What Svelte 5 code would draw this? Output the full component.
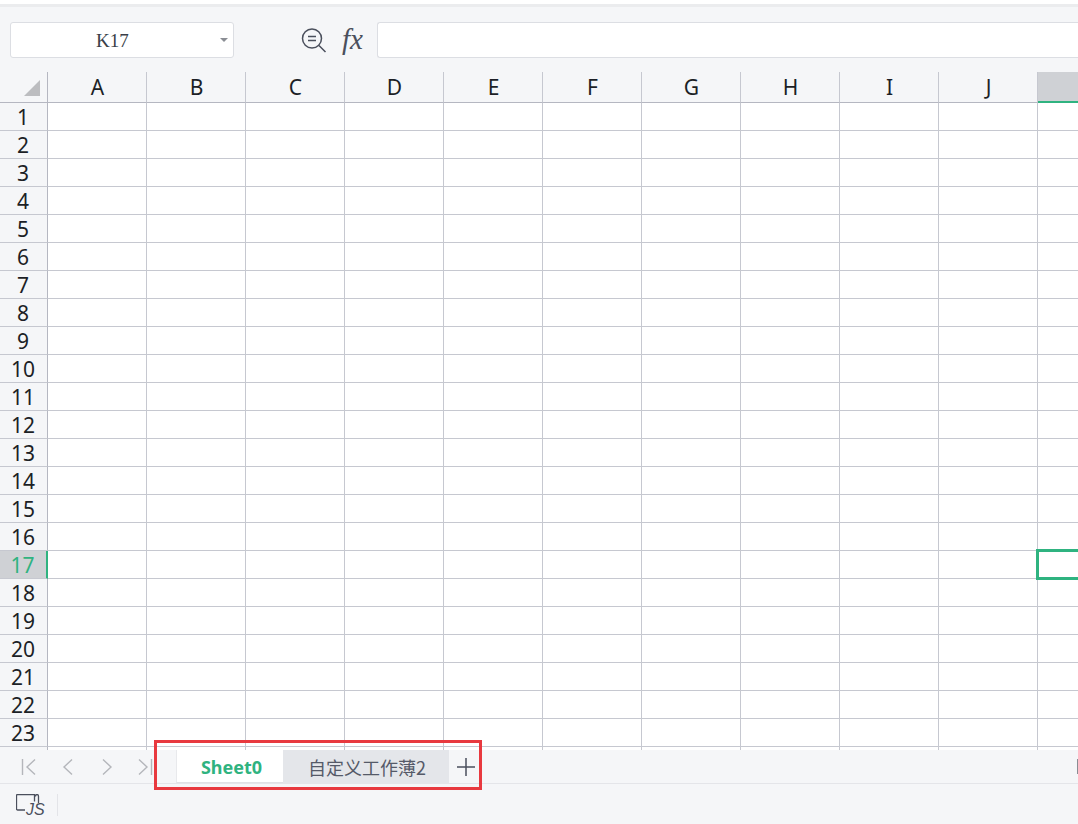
<script>
  // Column and row headers of the sheet
  const columns = ['A', 'B', 'C', 'D', 'E', 'F', 'G', 'H', 'I', 'J', 'K'];
  const rows = Array.from({ length: 24 }, (_, i) => i + 1);
  const activeColumn = 'K';
  const activeRow = 17;
</script>

<div class="page">
  <div class="topline"></div>

  <div class="toolbar">
    <div class="namebox">
      <span class="cellname">K17</span>
      <span class="caret"></span>
    </div>
    <svg class="zoom-icon" width="28" height="28" viewBox="0 0 28 28" fill="none" stroke="#4a4f5c" stroke-width="1.5">
      <circle cx="12" cy="12.500" r="9.500" />
      <path d="M8 10.500h8M8 14.500h8M19 19.500l6.500 6.500" />
    </svg>
    <span class="fx">fx</span>
    <div class="formula"></div>
  </div>

  <div class="sheet">
    <div class="row headrow">
      <div class="corner">
        <svg width="16" height="16" viewBox="0 0 16 16"><path d="M16 0v16H0z" fill="#bcbdc0" /></svg>
      </div>
      {#each columns as col}
        <div class="colhead" class:active={col === activeColumn}>{col === activeColumn ? '' : col}</div>
      {/each}
    </div>

    {#each rows as row}
      <div class="row">
        <div class="rowhead" class:active={row === activeRow}>{row === 24 ? '' : row}</div>
        {#each columns as col}
          <div class="cell" class:selected={col === activeColumn && row === activeRow}></div>
        {/each}
      </div>
    {/each}
  </div>

  <div class="tabbar">
    <div class="nav">
      <svg width="16" height="18" viewBox="0 0 16 18" fill="none" stroke="#b4b6bb" stroke-width="1.4"><path d="M1.500 1v16M14 1.500L6 9l8 7.500" /></svg>
      <svg width="16" height="18" viewBox="0 0 16 18" fill="none" stroke="#b4b6bb" stroke-width="1.4"><path d="M12 1.500L4 9l8 7.500" /></svg>
      <svg width="16" height="18" viewBox="0 0 16 18" fill="none" stroke="#b4b6bb" stroke-width="1.4"><path d="M4 1.500L12 9l-8 7.500" /></svg>
      <svg width="16" height="18" viewBox="0 0 16 18" fill="none" stroke="#b4b6bb" stroke-width="1.4"><path d="M1 1.500L9 9l-8 7.500M13.500 1v16" /></svg>
    </div>
    <div class="tab current">Sheet0</div>
    <div class="tab other">自定义工作薄2</div>
    <svg class="plus" width="20" height="20" viewBox="0 0 20 20" stroke="#4a4f5c" stroke-width="1.5"><path d="M10 1v18M1 10h18" /></svg>
    <div class="scrollmark"></div>
  </div>

  <div class="statusbar">
    <svg width="26" height="24" viewBox="0 0 26 24" fill="none" stroke="#4a4f5c" stroke-width="1.3">
      <path d="M9 16H1.500a1 1 0 0 1-1-1V1.500a1 1 0 0 1 1-1h17v7M19.500 2.500q0-2 1.500-2t1.500 2V9" />
    </svg>
    <span class="js">JS</span>
    <div class="divider"></div>
  </div>

  <div class="highlight"></div>
</div>

<style>
  :global(body) {
    margin: 0;
    background: #f5f6f8;
  }

  .page {
    position: relative;
    width: 1078px;
    height: 824px;
    overflow: hidden;
    font-family: "Noto Sans", "Noto Sans CJK SC", sans-serif;
    color: #1c1f26;
  }

  .topline {
    height: 7px;
    box-sizing: border-box;
    background: #fff;
    border-bottom: 3px solid #ebecee;
  }

  .toolbar {
    height: 65px;
    box-sizing: border-box;
    padding: 15px 0 0 10px;
    display: flex;
    align-items: flex-start;
  }

  .namebox {
    width: 224px;
    height: 36px;
    box-sizing: border-box;
    background: #fff;
    border: 1px solid #dcdee3;
    border-radius: 3px;
    display: flex;
    align-items: center;
    position: relative;
  }

  .cellname {
    margin: 2px 0 0 85px;
    font: 19px "Liberation Serif", serif;
    color: #3a3e48;
  }

  .caret {
    position: absolute;
    right: 5px;
    top: 15px;
    border: 4px solid transparent;
    border-top: 4px solid #8a8d94;
  }

  .zoom-icon {
    margin: 4px 0 0 66px;
  }

  .fx {
    margin: 1px 0 0 14px;
    width: 35px;
    font: italic 400 29px "Liberation Serif", serif;
    line-height: 32px;
    color: #4a4f5c;
  }

  .formula {
    flex: 1;
    height: 36px;
    box-sizing: border-box;
    background: #fff;
    border: 1px solid #dcdee3;
    border-right: 0;
    border-radius: 3px 0 0 3px;
  }

  .sheet {
    height: 678px;
    overflow: hidden;
  }

  .row {
    display: flex;
    height: 28px;
  }

  .headrow {
    height: 31px;
  }

  .corner {
    width: 48px;
    flex: none;
    box-sizing: border-box;
    border-right: 1px solid #b5b7c1;
    border-bottom: 1px solid #b5b7c1;
    display: flex;
    justify-content: flex-end;
    align-items: flex-end;
    padding: 0 7px 6px 0;
  }

  .colhead {
    width: 99px;
    flex: none;
    box-sizing: border-box;
    border-right: 1px solid #c6c8d0;
    border-bottom: 1px solid #b5b7c1;
    padding-left: 1px;
    text-align: center;
    font-size: 21px;
    line-height: 30px;
  }

  .colhead.active {
    background: #cfd1d5;
    border-bottom: 2px solid #2fb380;
  }

  .rowhead {
    width: 48px;
    flex: none;
    box-sizing: border-box;
    border-right: 1px solid #b5b7c1;
    border-bottom: 1px solid #c6c8d0;
    text-align: center;
    font-size: 21px;
    line-height: 28px;
    padding-right: 1px;
  }

  .rowhead.active {
    background: #cfd1d5;
    color: #2fb380;
    border-right: 2px solid #2fb380;
  }

  .cell {
    width: 99px;
    flex: none;
    box-sizing: border-box;
    background: #fff;
    border-right: 1px solid #c6c8d0;
    border-bottom: 1px solid #c6c8d0;
  }

  .cell.selected {
    position: relative;
  }

  /* selected cell outline sits over the grid lines */
  .cell.selected::after {
    content: "";
    position: absolute;
    left: -2px;
    top: -2px;
    width: 120px;
    height: 31px;
    box-sizing: border-box;
    border: 3px solid #2fb380;
  }

  .tabbar {
    height: 34px;
    display: flex;
    align-items: flex-start;
    position: relative;
    box-sizing: border-box;
    border-bottom: 1px solid #e4e5e9;
    background: #f5f6f8;
  }

  .nav {
    width: 176px;
    flex: none;
    box-sizing: border-box;
    padding: 8px 0 0 21px;
    display: flex;
    gap: 23px;
  }

  .tab {
    height: 33px;
    box-sizing: border-box;
    font-size: 18px;
    line-height: 35px;
    text-align: center;
  }

  .current {
    width: 107px;
    padding-left: 3px;
    background: #fff;
    color: #2fb380;
    font-weight: 700;
    border-left: 1px solid #e8e9ec;
    border-bottom: 1px solid #e0e1e5;
  }

  .other {
    width: 166px;
    padding-left: 2px;
    background: #e4e6ea;
    color: #555a68;
    font-family: "Noto Sans CJK SC", sans-serif;
  }

  .plus {
    margin: 7px 0 0 7px;
  }

  .scrollmark {
    position: absolute;
    right: 0;
    top: 9px;
    width: 1px;
    height: 15px;
    background: #8a8d94;
  }

  .statusbar {
    height: 40px;
    box-sizing: border-box;
    padding: 10px 0 0 16px;
    display: flex;
    align-items: flex-start;
    position: relative;
  }

  .js {
    position: absolute;
    left: 26px;
    top: 17px;
    font: italic 400 16px "Liberation Sans", sans-serif;
    color: #4a4f5c;
  }

  .divider {
    margin-left: 15px;
    width: 1px;
    height: 22px;
    background: #e3e4e8;
  }

  /* red annotation frame drawn over the tab bar */
  .highlight {
    position: absolute;
    left: 154px;
    top: 740px;
    width: 328px;
    height: 50px;
    box-sizing: border-box;
    border: 3px solid #e8393f;
  }
</style>
